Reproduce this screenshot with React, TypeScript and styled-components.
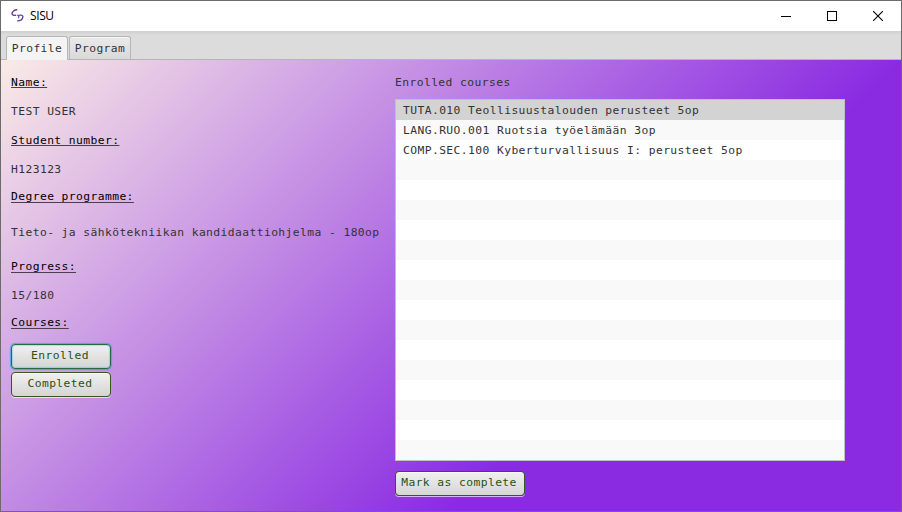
import React, { useState } from "react";
import styled, { createGlobalStyle } from "styled-components";

const GlobalStyle = createGlobalStyle`
  * { box-sizing: border-box; }
  body { margin: 0; overflow: hidden; }
`;

const Window = styled.div`
  display: flex;
  flex-direction: column;
  width: 902px;
  height: 512px;
  border: 1px solid #6b6b6b;
  font: 11.3px/16px "DejaVu Sans Mono", "Liberation Mono", monospace;
  letter-spacing: 0.425px;
  color: #333333;
  white-space: pre;
`;

const TitleBar = styled.header`
  display: flex;
  align-items: center;
  height: 30px;
  padding-left: 9px;
  background: #ffffff;
`;

const Title = styled.span`
  flex: 1;
  margin-left: 4px;
  font: 12px/16px "Open Sans", "Noto Sans", sans-serif;
  letter-spacing: -0.4px;
  color: #000000;
`;

const WindowButton = styled.span`
  display: flex;
  justify-content: center;
  align-items: center;
  width: 46px;
  height: 29px;
`;

const TabBar = styled.nav`
  display: flex;
  align-items: flex-end;
  gap: 1px;
  height: 29px;
  padding-left: 5px;
  border-bottom: 1px solid #b5b5b5;
  background: linear-gradient(#cecece, #dcdcdc 4px);
`;

const Tab = styled.div<{ $active?: boolean }>`
  width: 62px;
  height: ${(p) => (p.$active ? 24 : 23)}px;
  margin-bottom: ${(p) => (p.$active ? -1 : 0)}px;
  padding-top: 4px;
  border: 1px solid #b5b5b5;
  border-bottom: 0;
  border-radius: 3px 3px 0 0;
  background: ${(p) => (p.$active ? "#f4f4f4" : "linear-gradient(#eaeaea, #d9d9d9)")};
  box-shadow: inset 0 1px 0 #f8f8f8;
  text-align: center;
`;

const Content = styled.main`
  flex: 1;
  display: flex;
  padding-left: 10px;
  background: linear-gradient(135deg, #faebe6 0, #8a2be2 636px);
`;

const Profile = styled.section`
  display: flex;
  flex-direction: column;
  align-items: flex-start;
  width: 384px;
  padding-top: 15px;
`;

const Value = styled.div<{ $gap: number }>`
  height: 14px;
  margin-bottom: ${(p) => p.$gap}px;
`;

const Label = styled(Value)<{ $tight?: boolean }>`
  color: #000000;
  text-decoration: underline 1px #4a3f4c;
  text-underline-offset: ${(p) => (p.$tight ? 1 : 2)}px;
  text-decoration-skip-ink: none;
`;

const Button = styled.button<{ $width: number; $focused?: boolean }>`
  width: ${(p) => p.$width}px;
  height: 25px;
  margin: 0 0 3px;
  padding: 0 2px 1px 0;
  border: 1px solid ${(p) => (p.$focused ? "#236b45" : "#35591c")};
  border-radius: 4px;
  background: linear-gradient(#f0f0f0, #d5d5d5);
  box-shadow: ${(p) =>
    p.$focused
      ? "0 0 1px 1px rgba(3, 158, 211, 0.55), inset 0 0 1px 1px rgba(3, 158, 211, 0.25)"
      : "inset 0 1px 0 #fafafa, 0 1px 0 rgba(255, 255, 255, 0.65)"};
  font: inherit;
  letter-spacing: inherit;
  white-space: nowrap;
  color: #2b5010;
  outline: none;
`;

const CourseColumn = styled.section`
  display: flex;
  flex-direction: column;
  width: 450px;
  padding-top: 15px;
`;

const CourseList = styled.div`
  height: 362px;
  margin: 10px 0;
  border: 1px solid #c0c0c0;
  background: repeating-linear-gradient(#ffffff 0 20px, #f9f9f9 20px 40px);
`;

const CourseRow = styled.div<{ $selected?: boolean; $odd: boolean }>`
  height: 20px;
  padding: 3px 7px 0;
  background: ${(p) => (p.$selected ? "#d3d3d3" : p.$odd ? "#f9f9f9" : "#ffffff")};
`;

const courses = [
  "TUTA.010 Teollisuustalouden perusteet 5op",
  "LANG.RUO.001 Ruotsia työelämään 3op",
  "COMP.SEC.100 Kyberturvallisuus I: perusteet 5op",
];

const Logo = () => (
  <svg width="16" height="16" viewBox="0 0 16 16" fill="none" stroke="#65399b" strokeWidth="1.4">
    <path d="M7.3 1.8C4.6 1.6 2 3.8 2 5.6C2 7 3.6 7.5 6 7.3" />
    <path d="M6.8 7.3H9.3C8.5 8.2 8.4 9.2 8.9 10.2" strokeWidth="1.1" />
    <path d="M10.2 7.2C12.2 7 13 7.6 12.8 9C12.5 11.2 10.2 12.9 7.2 12.9" />
  </svg>
);

export default function App() {
  const [selected, setSelected] = useState(0);
  return (
    <>
      <GlobalStyle />
      <Window>
        <TitleBar>
          <Logo />
          <Title>SISU</Title>
          <WindowButton>
            <svg width="10" height="10" shapeRendering="crispEdges"><path d="M0 5.5H10" stroke="#000" /></svg>
          </WindowButton>
          <WindowButton>
            <svg width="10" height="10" shapeRendering="crispEdges"><path d="M.5.5H9.5V9.5H.5Z" fill="none" stroke="#000" /></svg>
          </WindowButton>
          <WindowButton>
            <svg width="10" height="10"><path d="M0 0L10 10M10 0L0 10" stroke="#000" strokeWidth="1.1" /></svg>
          </WindowButton>
        </TitleBar>
        <TabBar>
          <Tab $active>Profile</Tab>
          <Tab>Program</Tab>
        </TabBar>
        <Content>
          <Profile>
            <Label $gap={15} $tight>Name:</Label>
            <Value $gap={15}>TEST USER</Value>
            <Label $gap={15} $tight>Student number:</Label>
            <Value $gap={13}>H123123</Value>
            <Label $gap={22}>Degree programme:</Label>
            <Value $gap={20}>Tieto- ja sähkötekniikan kandidaattiohjelma - 180op</Value>
            <Label $gap={15}>Progress:</Label>
            <Value $gap={13}>15/180</Value>
            <Label $gap={15}>Courses:</Label>
            <Button $width={100} $focused>Enrolled</Button>
            <Button $width={100}>Completed</Button>
          </Profile>
          <CourseColumn>
            <Value $gap={0}>Enrolled courses</Value>
            <CourseList>
              {courses.map((name, i) => (
                <CourseRow key={name} $selected={i === selected} $odd={i % 2 === 1} onClick={() => setSelected(i)}>
                  {name}
                </CourseRow>
              ))}
            </CourseList>
            <Button $width={130}>Mark as complete</Button>
          </CourseColumn>
        </Content>
      </Window>
    </>
  );
}
